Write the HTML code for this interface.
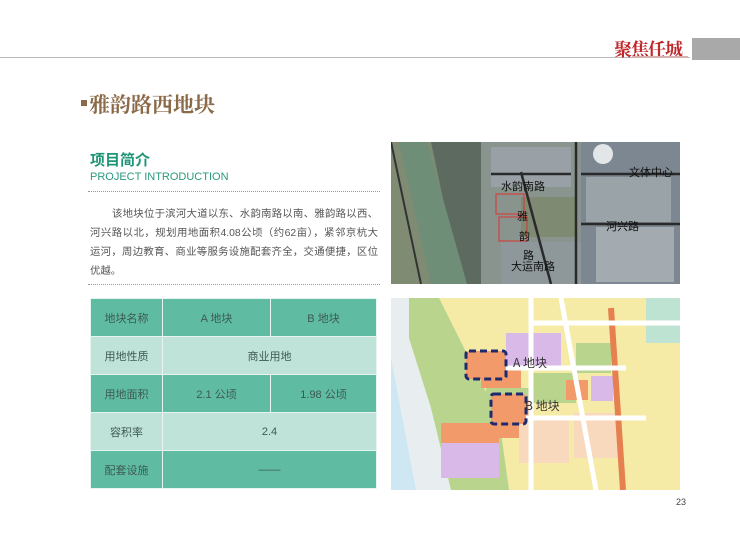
<!DOCTYPE html>
<html><head><meta charset="utf-8"><style>
*{margin:0;padding:0;box-sizing:border-box}
body{width:740px;height:545px;background:#fff;position:relative;overflow:hidden;font-family:"Liberation Sans","Noto Sans CJK SC",sans-serif}
.abs{position:absolute}
table{border-collapse:collapse;position:absolute;left:90px;top:298px;width:287px;height:190px}
td{text-align:center;font-size:11px;color:#3d5a52;border:1.5px solid #e8f4f0;height:38px}
.d td{background:#5fbba2}
.l td{background:#bfe3d9}
.p div{text-align:justify;text-align-last:justify;white-space:nowrap;height:19px}
</style></head><body>
<div class="abs" style="left:0;top:57px;width:690px;height:1px;background:#bbb"></div>
<div class="abs" style="left:692px;top:38px;width:48px;height:22px;background:#a9a9a9"></div>
<div class="abs" style="left:614px;top:36px;font-family:'Noto Serif CJK SC',serif;font-size:18px;color:#c0292b;font-weight:bold;letter-spacing:-1px">聚焦任城</div>
<div class="abs" style="left:632px;top:56px;width:56px;height:2px;background:#d9b0b0"></div>
<div class="abs" style="left:81px;top:100px;width:6px;height:6px;background:#8a6a48"></div>
<div class="abs" style="left:89px;top:89px;font-family:'Noto Serif CJK SC',serif;font-weight:bold;font-size:21px;color:#8a6a48">雅韵路西地块</div>
<div class="abs" style="left:90px;top:149px;font-weight:bold;font-size:15px;color:#1f9577;font-family:'Noto Sans CJK SC',sans-serif">项目简介</div>
<div class="abs" style="left:90px;top:171px;font-size:11px;color:#2a9a7c">PROJECT INTRODUCTION</div>
<div class="abs" style="left:88px;top:191px;width:292px;border-top:1px dotted #999"></div>
<div class="abs p" style="left:90px;top:205px;width:288px;font-size:10.4px;line-height:19px;color:#555">
<div style="padding-left:22px">该地块位于滨河大道以东、水韵南路以南、雅韵路以西、</div>
<div>河兴路以北，规划用地面积4.08公顷（约62亩），紧邻京杭大</div>
<div>运河，周边教育、商业等服务设施配套齐全，交通便捷，区位</div>
<div style="text-align-last:left">优越。</div>
</div>
<div class="abs" style="left:88px;top:284px;width:292px;border-top:1px dotted #999"></div>
<table>
<tr class="d"><td style="width:72px">地块名称</td><td style="width:108px">A 地块</td><td>B 地块</td></tr>
<tr class="l"><td>用地性质</td><td colspan="2">商业用地</td></tr>
<tr class="d"><td>用地面积</td><td>2.1 公顷</td><td>1.98 公顷</td></tr>
<tr class="l"><td>容积率</td><td colspan="2">2.4</td></tr>
<tr class="d"><td>配套设施</td><td colspan="2">——</td></tr>
</table>
<svg class="abs" style="left:391px;top:142px" width="289" height="142" viewBox="0 0 289 142">
<rect width="289" height="142" fill="#5d6a60"/>
<path d="M0 0h40l30 142H0z" fill="#7f8b72"/>
<path d="M8 0h28l40 142H40z" fill="#6f8e78"/>
<rect x="90" y="0" width="100" height="142" fill="#8a948e"/>
<rect x="190" y="0" width="99" height="142" fill="#7c8791"/>
<rect x="195" y="35" width="85" height="45" fill="#9aa3a8"/>
<rect x="205" y="85" width="78" height="55" fill="#a3aab0"/>
<rect x="100" y="5" width="80" height="40" fill="#9aa1a6"/>
<rect x="130" y="55" width="55" height="40" fill="#7f8a72"/>
<rect x="110" y="100" width="80" height="42" fill="#8e989b"/>
<circle cx="212" cy="12" r="10" fill="#e3e6e8"/>
<path d="M0 0 L30 142" stroke="#333" stroke-width="2"/>
<path d="M185 0V142M130 30L160 142M100 32h80M190 32h99M190 82h99" stroke="#2a2a2a" stroke-width="2.5" fill="none"/>
<rect x="105" y="52" width="28" height="20" fill="none" stroke="#d33"/>
<rect x="108" y="75" width="28" height="24" fill="none" stroke="#d33"/>
<g font-size="11" fill="#111" font-family="Noto Sans CJK SC,sans-serif"><text x="110" y="48">水韵南路</text><text x="238" y="34">文体中心</text><text x="215" y="88">河兴路</text><text x="126" y="78">雅</text><text x="128" y="98">韵</text><text x="132" y="117">路</text><text x="120" y="128">大运南路</text></g>
</svg>
<svg class="abs" style="left:391px;top:298px" width="289" height="192" viewBox="0 0 289 192">
<rect width="289" height="192" fill="#f5eba6"/>
<path d="M0 0h30l80 192H0z" fill="#e8eef0"/>
<path d="M0 60l25 132H0z" fill="#cfe7f2"/>
<path d="M18 0h30l60 120 10 72H60L40 110 18 40z" fill="#b9d48c"/>
<rect x="90" y="70" width="40" height="20" fill="#f29a6a"/><rect x="100" y="100" width="38" height="40" fill="#f29a6a"/>
<rect x="95" y="90" width="45" height="12" fill="#b9d48c"/><rect x="140" y="75" width="45" height="30" fill="#b9d48c"/>
<rect x="115" y="35" width="55" height="35" fill="#d9b9e8"/><rect x="185" y="45" width="35" height="30" fill="#b9d48c"/>
<rect x="200" y="78" width="22" height="25" fill="#d9b9e8"/><rect x="175" y="82" width="22" height="20" fill="#f29a6a"/>
<rect x="50" y="125" width="58" height="20" fill="#f29a6a"/><rect x="50" y="145" width="58" height="35" fill="#d9b9e8"/>
<rect x="128" y="120" width="50" height="45" fill="#f8d9bd"/><rect x="183" y="115" width="45" height="45" fill="#f8d9bd"/>
<rect x="255" y="0" width="34" height="45" fill="#bfe3d3"/>
<path d="M220 10L232 192" stroke="#e68050" stroke-width="6"/>
<path d="M140 0V192M170 0L205 192M105 120h150M95 70h140M140 25h149" stroke="#fff" stroke-width="5" fill="none"/>
<rect x="75" y="53" width="40" height="28" rx="3" fill="#f29a6a" stroke="#1f2a6e" stroke-width="3" stroke-dasharray="7 4"/>
<rect x="100" y="96" width="35" height="30" rx="3" fill="#f29a6a" stroke="#1f2a6e" stroke-width="3" stroke-dasharray="7 4"/>
<g font-size="12" fill="#333" font-family="Noto Sans CJK SC,sans-serif"><text x="122" y="69">A 地块</text><text x="134" y="112">B 地块</text></g>
</svg>
<div class="abs" style="left:676px;top:497px;font-size:9px;color:#444">23</div>
</body></html>
